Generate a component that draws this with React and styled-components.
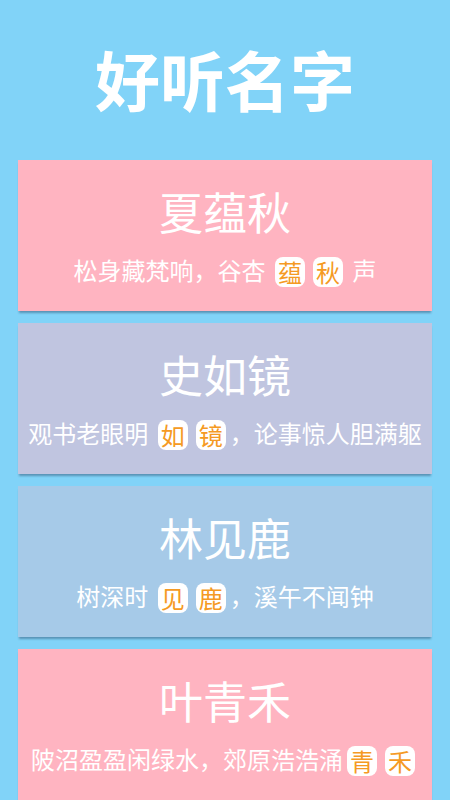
import React from "react";
import styled, { createGlobalStyle } from "styled-components";

const Global = createGlobalStyle`
  html, body {
    margin: 0;
    padding: 0;
    background: #81d3f8;
  }
  body {
    font-family: "Noto Sans CJK SC", "Noto Sans", sans-serif;
  }
`;

const Page = styled.div`
  width: 450px;
  min-height: 800px;
  background: #81d3f8;
  overflow: hidden;
`;

const Header = styled.header`
  height: 160px;
  display: flex;
  align-items: center;
  justify-content: center;
`;

const Title = styled.h1`
  margin: 0;
  color: #ffffff;
  font-size: 65px;
  font-weight: 700;
  line-height: 1;
  letter-spacing: 0;
  transform: translateY(-2px);
`;

const List = styled.main`
  display: flex;
  flex-direction: column;
  gap: 12px;
  padding: 0 18px;
`;

const Card = styled.section`
  height: 151px;
  box-sizing: border-box;
  padding-top: 25px;
  background: ${(p) => p.$bg};
  box-shadow: 0 3px 2px -1px rgba(40, 70, 100, 0.45);
  display: flex;
  flex-direction: column;
  align-items: center;
  gap: 18px;
`;

const Name = styled.div`
  color: #ffffff;
  font-size: 44px;
  line-height: 52px;
  font-weight: 400;
`;

const Verse = styled.div`
  color: #ffffff;
  font-size: 24px;
  line-height: 30px;
  white-space: pre;
`;

const Mark = styled.span`
  display: inline-block;
  background: #ffffff;
  color: #f59a23;
  border-radius: 8px;
  padding: 0 3px;
  margin: 0 4px;
  line-height: 30px;
  vertical-align: middle;
  transform: translateY(-1px);
`;

const items = [
  {
    name: "夏蕴秋",
    bg: "#ffb4c1",
    parts: ["松身藏梵响，谷杏 ", ["蕴"], ["秋"], " 声"],
  },
  {
    name: "史如镜",
    bg: "#c0c5e0",
    parts: ["观书老眼明 ", ["如"], ["镜"], "，论事惊人胆满躯"],
  },
  {
    name: "林见鹿",
    bg: "#a6cae8",
    parts: ["树深时 ", ["见"], ["鹿"], "，溪午不闻钟"],
  },
  {
    name: "叶青禾",
    bg: "#ffb4c1",
    parts: ["陂沼盈盈闲绿水，郊原浩浩涌", ["青"], ["禾"]],
  },
];

export default function App() {
  return (
    <Page>
      <Global />
      <Header>
        <Title>好听名字</Title>
      </Header>
      <List>
        {items.map((it) => (
          <Card key={it.name} $bg={it.bg}>
            <Name>{it.name}</Name>
            <Verse>
              {it.parts.map((p, i) =>
                Array.isArray(p) ? <Mark key={i}>{p[0]}</Mark> : <React.Fragment key={i}>{p}</React.Fragment>
              )}
            </Verse>
          </Card>
        ))}
      </List>
    </Page>
  );
}
